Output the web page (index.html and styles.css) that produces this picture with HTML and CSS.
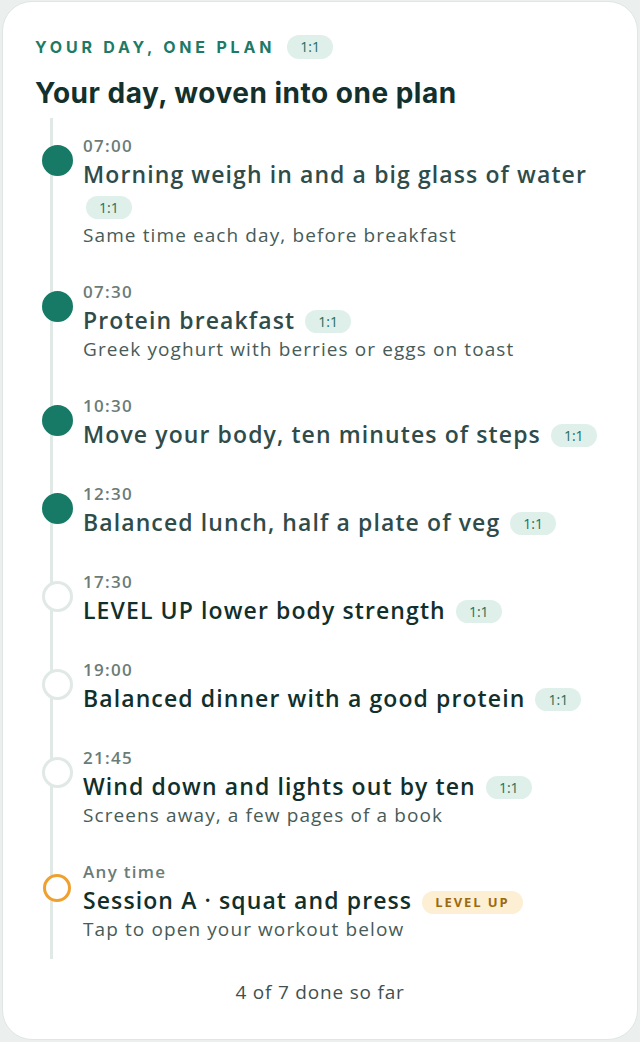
FILE: index.html
```html
<!DOCTYPE html>
<html lang="en">
<head>
    <meta charset="UTF-8">
    <meta name="viewport" content="width=device-width, initial-scale=1.0">
    <title>Your Day</title>
    <link rel="stylesheet" href="styles.css">
</head>
<body>
    <div class="card">
        <div class="eyebrow">
            <span class="eyebrow-text">Your day, one plan</span>
            <span class="pill">1:1</span>
        </div>
        <h1 class="title">Your day, woven into one plan</h1>

        <!-- Timeline of the day -->
        <ul class="timeline">
            <li class="item done">
                <div class="time">07:00</div>
                <div class="name">Morning weigh in and a big glass of water <span class="pill">1:1</span></div>
                <div class="desc">Same time each day, before breakfast</div>
            </li>
            <li class="item done">
                <div class="time">07:30</div>
                <div class="name">Protein breakfast <span class="pill">1:1</span></div>
                <div class="desc">Greek yoghurt with berries or eggs on toast</div>
            </li>
            <li class="item done">
                <div class="time">10:30</div>
                <div class="name">Move your body, ten minutes of steps <span class="pill">1:1</span></div>
            </li>
            <li class="item done">
                <div class="time">12:30</div>
                <div class="name">Balanced lunch, half a plate of veg <span class="pill">1:1</span></div>
            </li>
            <li class="item">
                <div class="time">17:30</div>
                <div class="name">LEVEL UP lower body strength <span class="pill">1:1</span></div>
            </li>
            <li class="item">
                <div class="time">19:00</div>
                <div class="name">Balanced dinner with a good protein <span class="pill">1:1</span></div>
            </li>
            <li class="item">
                <div class="time">21:45</div>
                <div class="name">Wind down and lights out by ten <span class="pill">1:1</span></div>
                <div class="desc">Screens away, a few pages of a book</div>
            </li>
            <li class="item session">
                <div class="time">Any time</div>
                <div class="name">Session A · squat and press <span class="pill pill-level">Level up</span></div>
                <div class="desc">Tap to open your workout below</div>
            </li>
        </ul>

        <p class="progress">4 of 7 done so far</p>
    </div>
</body>
</html>
```

FILE: styles.css
```css
/* General Styles */
* {
    margin: 0;
    padding: 0;
    box-sizing: border-box;
}

body {
    background: #ebf0ee;
    font-family: 'Open Sans', sans-serif;
    color: #112f2b;
    padding: 1px 2px 2px;
}

/* Card */
.card {
    background: #fff;
    border: 1px solid #dfe6e3;
    border-radius: 30px;
    height: 1039px;
    padding: 33px 32px 0;
}

.eyebrow {
    display: flex;
    align-items: center;
    gap: 12px;
    height: 24px;
}

.eyebrow-text {
    font-family: 'Inter', sans-serif;
    font-size: 16px;
    font-weight: 700;
    letter-spacing: 3.8px;
    text-transform: uppercase;
    color: #1c7a66;
}

.pill {
    display: inline-block;
    vertical-align: 2px;
    margin-left: 3px;
    padding: 0 13px;
    height: 23px;
    line-height: 23px;
    border-radius: 12px;
    background: #dff0ea;
    color: #1e6e5c;
    font-size: 14px;
    font-weight: 500;
    letter-spacing: 0;
}

.eyebrow .pill {
    margin-left: 0;
    height: 24px;
    line-height: 24px;
}

.pill-level {
    background: #fcefd3;
    color: #9a6a12;
    font-size: 13px;
    font-weight: 700;
    letter-spacing: 1.9px;
    text-transform: uppercase;
}

.title {
    font-family: 'Inter', sans-serif;
    font-size: 28px;
    font-weight: 700;
    letter-spacing: 0.5px;
    line-height: 34px;
    color: #13302c;
    margin-top: 17px;
}

/* Timeline */
.timeline {
    list-style: none;
    position: relative;
    margin-top: 8px;
    padding: 16px 0 17px 48px;
    display: flex;
    flex-direction: column;
    gap: 32px;
}

.timeline::before {
    content: "";
    position: absolute;
    left: 15px;
    top: 0;
    bottom: 0;
    width: 3px;
    background: #e0e9e5;
}

.item {
    position: relative;
}

/* Dot on the line */
.item::before {
    content: "";
    position: absolute;
    left: -41px;
    top: 11px;
    width: 25px;
    height: 25px;
    border-radius: 50%;
    background: #fff;
    border: 3px solid #e0e9e5;
}

.item.done::before {
    background: #177a66;
    border-color: #177a66;
}

.item.session::before {
    left: -40px;
    top: 14px;
    width: 22px;
    height: 22px;
    border-color: #f0a02e;
}

.time {
    font-size: 17px;
    font-weight: 600;
    letter-spacing: 1.3px;
    line-height: 24px;
    color: #6b7c78;
}

.name {
    font-size: 23px;
    font-weight: 600;
    letter-spacing: 1.1px;
    line-height: 32px;
    color: #112f2b;
}

.done .name {
    color: #2f4c4a;
}

.desc {
    font-size: 19px;
    letter-spacing: 1.1px;
    line-height: 26px;
    color: #475b58;
}

.progress {
    margin-top: 20px;
    text-align: center;
    font-size: 19px;
    letter-spacing: 0.8px;
    line-height: 26px;
    color: #3f514e;
}
```
